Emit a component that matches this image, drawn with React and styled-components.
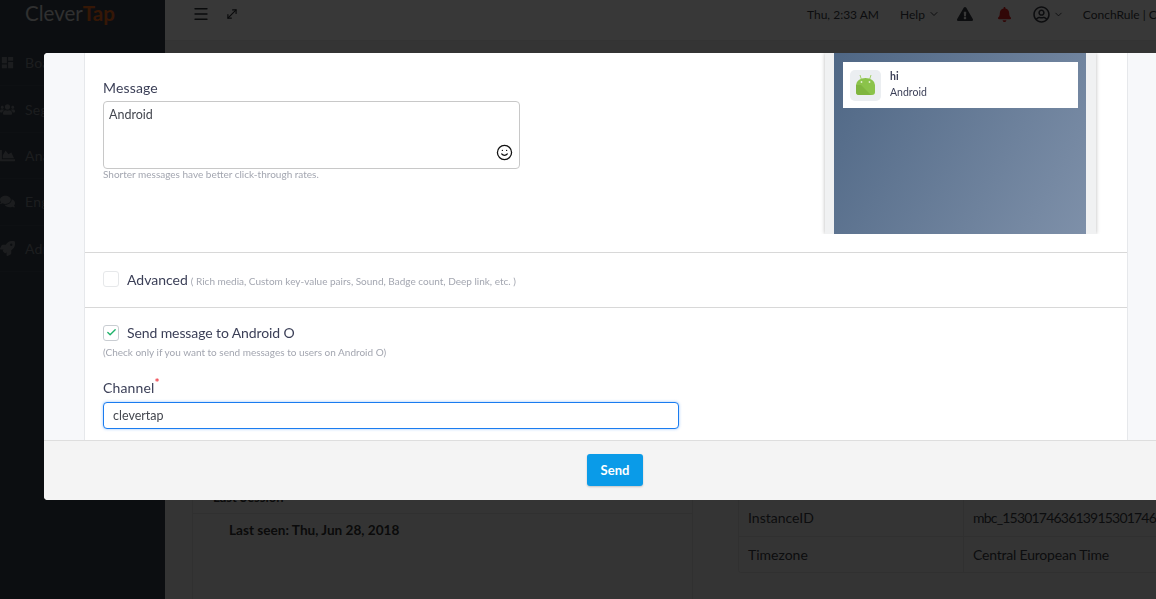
import React from 'react';
import styled, { createGlobalStyle } from 'styled-components';
import { Check, ChevronDown, Menu, MoveDiagonal, Smile } from 'lucide-react';
import { FaBell, FaChartArea, FaComments, FaExclamationTriangle, FaRocket, FaRegUserCircle, FaUsers } from 'react-icons/fa';
import { MdDashboard } from 'react-icons/md';

const FONT = "Lato, 'Open Sans', sans-serif";

const GlobalStyle = createGlobalStyle`
  html, body {
    margin: 0;
    height: 100%;
    overflow: hidden;
    background: #fff;
    font-family: ${FONT};
  }
  * { box-sizing: border-box; }
`;

const Page = styled.div`
  display: flex;
  width: 1156px;
  height: 599px;
  overflow: hidden;
`;

const Sidebar = styled.aside`
  width: 165px;
  flex: none;
  background: #37404d;
`;

const Logo = styled.div`
  height: 40px;
  padding: 0 0 0 25px;
  font-size: 20.5px;
  line-height: 26px;
  color: #d8d9da;
`;

const LogoAccent = styled.span`
  color: #f26a1b;
  font-weight: 700;
`;

const NavList = styled.nav`
  display: flex;
  flex-direction: column;
`;

const NavItem = styled.div`
  display: flex;
  align-items: center;
  gap: 10px;
  height: 46.4px;
  padding-left: 0;
  font-size: 14px;
  letter-spacing: 0.3px;
  color: #80858c;
  border-bottom: 1px solid #404a57;
`;

const Main = styled.main`
  flex: 1;
  min-width: 0;
  background: #eeeeee;
`;

const Topbar = styled.header`
  display: flex;
  align-items: flex-start;
  height: 41px;
  padding: 5px 0 0 27px;
  background: #fff;
  color: #2a2d33;
  font-size: 12px;
  border-bottom: 1px solid #e6e6e6;
  overflow: hidden;
`;

const TopIcons = styled.div`
  display: flex;
  align-items: center;
  gap: 15px;
  width: 615px;
  flex: none;
`;

const TopItem = styled.span`
  display: flex;
  align-items: center;
  gap: 3px;
  height: 18px;
  flex: none;
  margin-left: ${p => p.$gap || 0}px;
  white-space: nowrap;
  color: ${p => p.$color || '#3a3d44'};
`;

const Content = styled.div`
  display: flex;
  padding: 456px 0 0 27px;
  gap: 45px;
`;

const ProfilePanel = styled.section`
  width: 501px;
  height: 200px;
  flex: none;
  border-left: 1px solid #dcdcdc;
  border-right: 1px solid #dcdcdc;
`;

const ProfileRow = styled.div`
  height: 17px;
  padding-left: 20px;
  font-size: 13px;
  font-weight: 700;
  line-height: 0;
  color: #333;
  border-bottom: 1px solid #dcdcdc;
`;

const LastSeen = styled.div`
  padding: 8px 0 0 36px;
  font-size: 13.6px;
  font-weight: 700;
  color: #333;
`;

const InfoTable = styled.div`
  flex: 1;
  margin-top: 3px;
  min-width: 0;
  height: 73px;
  border: 1px solid #dcdcdc;
  border-top: none;
  border-right: none;
  border-radius: 0 0 0 3px;
`;

const InfoRow = styled.div`
  display: grid;
  grid-template-columns: 225px 1fr;
  height: 36px;
  font-size: 14px;
  line-height: 35px;
  color: #3a3d44;
  & + & { border-top: 1px solid #dcdcdc; }
`;

const InfoKey = styled.div`
  padding-left: 9px;
  border-right: 1px solid #dcdcdc;
`;

const InfoValue = styled.div`
  padding-left: 9px;
  overflow: hidden;
  white-space: nowrap;
  letter-spacing: ${p => p.$spacing || 0}px;
`;

const Backdrop = styled.div`
  position: fixed;
  inset: 0;
  background: rgba(0, 0, 0, 0.78);
`;

const Modal = styled.div`
  position: fixed;
  left: 44px;
  top: 53px;
  width: 1112px;
  height: 447px;
  display: flex;
  flex-direction: column;
  background: #fff;
  border-radius: 4px 0 0 4px;
  overflow: hidden;
`;

const ModalBody = styled.div`
  flex: 1;
  min-height: 0;
  display: flex;
  background: #f7f8fa;
  padding: 0 28px 0 40px;
`;

const Form = styled.div`
  flex: 1;
  min-width: 0;
  background: #fff;
  border-left: 1px solid #e6e8eb;
  border-right: 1px solid #e6e8eb;
`;

const MessageSection = styled.section`
  display: flex;
  justify-content: space-between;
  height: 200px;
  padding: 0 31px 0 18px;
  border-bottom: 1px solid #d8d8d8;
`;

const MessageField = styled.div`
  width: 417px;
  padding-top: 26px;
`;

const Label = styled.label`
  display: block;
  font-size: 14px;
  line-height: 18px;
  letter-spacing: 0.15px;
  color: #3b3f57;
`;

const TextBox = styled.div`
  position: relative;
  height: 68px;
  margin-top: 4px;
  padding: 5px;
  font-size: 12.5px;
  line-height: 16px;
  color: #44474f;
  border: 1px solid #c8c8c8;
  border-radius: 4px;
`;

const EmojiButton = styled.span`
  position: absolute;
  right: 6px;
  bottom: 7px;
  display: flex;
  color: #111;
`;

const Hint = styled.div`
  font-size: 10px;
  line-height: 12px;
  margin-top: ${p => p.$top || 0}px;
  color: #a3a6b0;
`;

const Phone = styled.div`
  width: 271px;
  height: 181px;
  padding: 0 10px 0 9px;
  background: #f0f1f2;
  box-shadow: 0 0 4px rgba(0, 0, 0, 0.28);
  clip-path: inset(0 -6px 0 -6px);
`;

const Screen = styled.div`
  height: 100%;
  padding: 9px 8px 0 9px;
  background: linear-gradient(120deg, #4f6785 0%, #7e90a9 100%);
`;

const Notification = styled.div`
  display: flex;
  align-items: center;
  gap: 9px;
  height: 46px;
  padding-left: 7px;
  background: #fff;
`;

const AppIcon = styled.div`
  width: 31px;
  height: 31px;
  display: flex;
  align-items: center;
  justify-content: center;
  background: #ebeef1;
  border-radius: 5px;
`;

const NotificationCopy = styled.div`
  padding-bottom: 2px;
`;

const NotificationTitle = styled.div`
  font-size: 10.5px;
  font-weight: 700;
  line-height: 16px;
  color: #3b3f57;
`;

const NotificationText = styled.div`
  font-size: 10.5px;
  line-height: 16px;
  color: #3b3f57;
`;

const AdvancedSection = styled.section`
  display: flex;
  align-items: center;
  gap: 8px;
  height: 55px;
  padding: 0 0 2px 18px;
  border-bottom: 1px solid #d8d8d8;
`;

const CheckBox = styled.span`
  width: 16px;
  height: 16px;
  flex: none;
  display: flex;
  align-items: center;
  justify-content: center;
  background: #fff;
  border: 1px solid ${p => (p.$checked ? '#c9cdd2' : '#e6e8ea')};
  border-radius: 3px;
  color: #1fb36b;
`;

const CheckLabel = styled.span`
  font-size: 14px;
  letter-spacing: ${p => p.$spacing || 0}px;
  color: #3b3f57;
`;

const CheckNote = styled.span`
  margin-left: 3px;
  font-size: 10px;
  color: #a3a6b0;
`;

const ChannelSection = styled.section`
  padding: 16px 18px 0;
`;

const CheckRow = styled.div`
  display: flex;
  align-items: center;
  gap: 8px;
`;

const ChannelLabel = styled(Label)`
  margin-top: 21px;
`;

const Required = styled.sup`
  color: #ef3b45;
  font-size: 12px;
  font-weight: 700;
  line-height: 0;
`;

const TextInput = styled.input`
  display: block;
  width: 576px;
  height: 27px;
  margin-top: 5px;
  padding: 0 9px;
  font-family: ${FONT};
  font-size: 12.5px;
  color: #44474f;
  background: #fff;
  border: 1px solid #1a7cf0;
  border-radius: 4px;
  box-shadow: 0 0 3px rgba(26, 124, 240, 0.45);
  outline: none;
`;

const ModalFooter = styled.footer`
  height: 60px;
  flex: none;
  display: flex;
  align-items: center;
  justify-content: center;
  background: #f4f4f4;
  border-top: 1px solid #dedede;
  padding: 0 0 2px 30px;
`;

const SendButton = styled.button`
  width: 56px;
  height: 32px;
  font-family: ${FONT};
  font-size: 13px;
  font-weight: 700;
  color: #fff;
  background: #0a9be8;
  border: none;
  border-radius: 3px;
  box-shadow: 0 1px 2px rgba(0, 0, 0, 0.2);
`;

const NAV_ITEMS = [
  { label: 'Boards', Icon: MdDashboard },
  { label: 'Segments', Icon: FaUsers },
  { label: 'Analytics', Icon: FaChartArea },
  { label: 'Engage', Icon: FaComments },
  { label: 'Admin', Icon: FaRocket },
];

function AndroidIcon() {
  return (
    <svg width="19" height="20" viewBox="0 0 19 20" aria-hidden="true">
      <path d="M4 0l1.4 4.5M15 0l-1.4 4.5" stroke="#a5d06c" strokeWidth="1" fill="none" />
      <path d="M0 10a9.5 7 0 0 1 19 0v7a3 3 0 0 1-3 3H3a3 3 0 0 1-3-3z" fill="#8bc34a" />
      <path d="M0 10h5l10 10H3a3 3 0 0 1-3-3z" fill="#7fb53f" />
      <circle cx="5.5" cy="7" r="0.9" fill="#e2f0cf" />
      <circle cx="13.5" cy="7" r="0.9" fill="#e2f0cf" />
    </svg>
  );
}

export default function App() {
  return (
    <Page>
      <GlobalStyle />
      <Sidebar>
        <Logo>Clever<LogoAccent>Tap</LogoAccent></Logo>
        <NavList>
          {NAV_ITEMS.map(({ label, Icon }) => (
            <NavItem key={label}><Icon size={15} />{label}</NavItem>
          ))}
        </NavList>
      </Sidebar>
      <Main>
        <Topbar>
          <TopIcons>
            <Menu size={18} strokeWidth={1.8} />
            <MoveDiagonal size={14} strokeWidth={2} />
          </TopIcons>
          <TopItem>Thu, 2:33 AM</TopItem>
          <TopItem $gap={21}>Help<ChevronDown size={12} /></TopItem>
          <TopItem $gap={17}><FaExclamationTriangle size={16} /></TopItem>
          <TopItem $gap={24} $color="#e02020"><FaBell size={15} /></TopItem>
          <TopItem $gap={21}><FaRegUserCircle size={17} /><ChevronDown size={11} /></TopItem>
          <TopItem $gap={19}>ConchRule | CleverTap</TopItem>
        </Topbar>
        <Content>
          <ProfilePanel>
            <ProfileRow>Last Session</ProfileRow>
            <LastSeen>Last seen: Thu, Jun 28, 2018</LastSeen>
          </ProfilePanel>
          <InfoTable>
            <InfoRow>
              <InfoKey>InstanceID</InfoKey>
              <InfoValue $spacing={-0.8}>mbc_15301746361391530174636139</InfoValue>
            </InfoRow>
            <InfoRow>
              <InfoKey>Timezone</InfoKey>
              <InfoValue $spacing={-0.2}>Central European Time</InfoValue>
            </InfoRow>
          </InfoTable>
        </Content>
      </Main>
      <Backdrop />
      <Modal>
        <ModalBody>
          <Form>
            <MessageSection>
              <MessageField>
                <Label>Message</Label>
                <TextBox>
                  Android
                  <EmojiButton><Smile size={17} strokeWidth={1.8} /></EmojiButton>
                </TextBox>
                <Hint $top={-1}>Shorter messages have better click-through rates.</Hint>
              </MessageField>
              <Phone>
                <Screen>
                  <Notification>
                    <AppIcon><AndroidIcon /></AppIcon>
                    <NotificationCopy>
                      <NotificationTitle>hi</NotificationTitle>
                      <NotificationText>Android</NotificationText>
                    </NotificationCopy>
                  </Notification>
                </Screen>
              </Phone>
            </MessageSection>
            <AdvancedSection>
              <CheckBox />
              <CheckLabel>Advanced<CheckNote>( Rich media, Custom key-value pairs, Sound, Badge count, Deep link, etc. )</CheckNote></CheckLabel>
            </AdvancedSection>
            <ChannelSection>
              <CheckRow>
                <CheckBox $checked><Check size={11} strokeWidth={3} /></CheckBox>
                <CheckLabel $spacing={-0.1}>Send message to Android O</CheckLabel>
              </CheckRow>
              <Hint $top={5}>(Check only if you want to send messages to users on Android O)</Hint>
              <ChannelLabel>Channel<Required>*</Required></ChannelLabel>
              <TextInput defaultValue="clevertap" aria-label="Channel" />
            </ChannelSection>
          </Form>
        </ModalBody>
        <ModalFooter>
          <SendButton>Send</SendButton>
        </ModalFooter>
      </Modal>
    </Page>
  );
}
